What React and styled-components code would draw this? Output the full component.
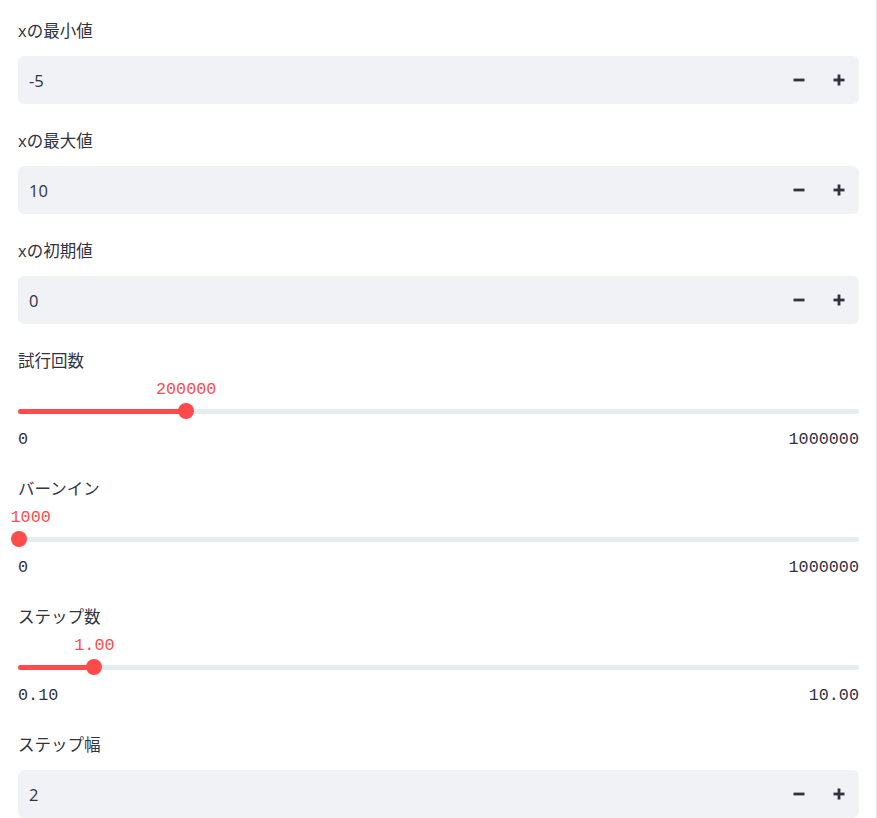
import React from 'react';
import styled, { createGlobalStyle } from 'styled-components';

const GlobalStyle = createGlobalStyle`
  html, body {
    margin: 0;
    padding: 0;
    background: #ffffff;
  }
  * {
    box-sizing: border-box;
  }
`;

const CHAR_W = 10.08;

const fields = [
  { type: 'number', label: 'xの最小値', value: '-5' },
  { type: 'number', label: 'xの最大値', value: '10' },
  { type: 'number', label: 'xの初期値', value: '0' },
  { type: 'slider', label: '試行回数', value: 200000, min: 0, max: 1000000, fmt: (v) => String(v) },
  { type: 'slider', label: 'バーンイン', value: 1000, min: 0, max: 1000000, fmt: (v) => String(v) },
  { type: 'slider', label: 'ステップ数', value: 1, min: 0.1, max: 10, fmt: (v) => v.toFixed(2) },
  { type: 'number', label: 'ステップ幅', value: '2' },
];

const MinusIcon = () => (
  <svg width="12" height="12" viewBox="0 0 12 12">
    <rect x="0.5" y="4.6" width="11" height="2.8" fill="#31333f" />
  </svg>
);

const PlusIcon = () => (
  <svg width="12" height="12" viewBox="0 0 12 12">
    <rect x="0.5" y="4.6" width="11" height="2.8" fill="#31333f" />
    <rect x="4.6" y="0.5" width="2.8" height="11" fill="#31333f" />
  </svg>
);

const NumberField = ({ label, value }) => (
  <Block>
    <Label>{label}</Label>
    <InputBox>
      <InputText>{value}</InputText>
      <StepButton>
        <MinusIcon />
      </StepButton>
      <StepButton>
        <PlusIcon />
      </StepButton>
    </InputBox>
  </Block>
);

const SliderField = ({ label, value, min, max, fmt }) => {
  const pct = (value - min) / (max - min);
  const text = fmt(value);
  const w = text.length * CHAR_W;
  // value text centred on the thumb, but kept from running past the thumb's left edge
  const offset = Math.max(-w / 2, -7.5 - pct * 841);
  return (
    <Block>
      <Label>{label}</Label>
      <SliderBody>
        <ValueRow>
          <ThumbValue style={{ left: `${pct * 100}%`, marginLeft: offset }}>
            {text}
          </ThumbValue>
        </ValueRow>
        <TrackRow>
          <Track>
            <Fill style={{ width: `${pct * 100}%` }} />
            <Thumb style={{ left: `${pct * 100}%` }} />
          </Track>
        </TrackRow>
        <TickRow>
          <Tick>{fmt(min)}</Tick>
          <Tick>{fmt(max)}</Tick>
        </TickRow>
      </SliderBody>
    </Block>
  );
};

const App = () => (
  <>
    <GlobalStyle />
    <Page>
      {fields.map((f) =>
        f.type === 'number' ? (
          <NumberField key={f.label} {...f} />
        ) : (
          <SliderField key={f.label} {...f} />
        )
      )}
    </Page>
  </>
);

export default App;

const Page = styled.div`
  width: 100%;
  min-height: 100vh;
  padding: 12px 17px 0 18px;
  border-right: 1px solid #e6e6ea;
  display: flex;
  flex-direction: column;
  gap: 18px;
  font-family: 'Open Sans', 'Noto Sans CJK JP', sans-serif;
  color: #31333f;
`;

const Block = styled.div`
  display: flex;
  flex-direction: column;
`;

const Label = styled.div`
  height: 36px;
  display: flex;
  align-items: center;
  font-size: 16.5px;
  color: #31333f;
`;

//////////////////////// number input //////////////////////////

const InputBox = styled.div`
  margin-top: 8px;
  height: 48px;
  display: flex;
  align-items: center;
  background-color: #f0f2f6;
  border-radius: 6px;
`;

const InputText = styled.div`
  flex: 1;
  padding-left: 11px;
  font-size: 16.5px;
  color: #31333f;
`;

const StepButton = styled.div`
  width: 40px;
  height: 100%;
  display: flex;
  justify-content: center;
  align-items: center;
  cursor: pointer;
`;

//////////////////////// slider //////////////////////////

const SliderBody = styled.div`
  display: flex;
  flex-direction: column;
`;

const ValueRow = styled.div`
  position: relative;
  height: 24px;
`;

const ThumbValue = styled.div`
  position: absolute;
  top: 0;
  line-height: 24px;
  font-family: 'Liberation Mono', 'DejaVu Sans Mono', monospace;
  font-size: 16.8px;
  color: #ff4b4b;
  white-space: nowrap;
`;

const TrackRow = styled.div`
  height: 18px;
  display: flex;
  align-items: center;
`;

const Track = styled.div`
  position: relative;
  width: 100%;
  height: 5px;
  border-radius: 3px;
  background-color: #e6eaf1;
`;

const Fill = styled.div`
  height: 100%;
  border-radius: 3px;
  background-color: #ff4b4b;
`;

const Thumb = styled.div`
  position: absolute;
  top: 50%;
  width: 16px;
  height: 16px;
  margin: -8px 0 0 -8px;
  border-radius: 50%;
  background-color: #ff4b4b;
`;

const TickRow = styled.div`
  padding-top: 8px;
  height: 32px;
  display: flex;
  justify-content: space-between;
  line-height: 24px;
  font-family: 'Liberation Mono', 'DejaVu Sans Mono', monospace;
  font-size: 16.8px;
  color: #31333f;
`;

const Tick = styled.span``;
